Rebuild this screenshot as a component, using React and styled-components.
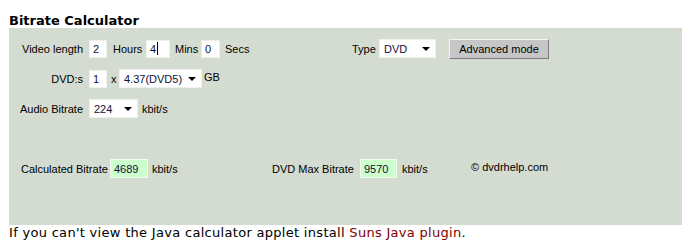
import styled, { createGlobalStyle } from "styled-components";

const GlobalStyle = createGlobalStyle`
  body {
    margin: 0;
    background: #fff;
  }
`;

const Page = styled.div`
  width: 683px;
  box-sizing: border-box;
  padding: 14px 0 0 9px;
`;

const Title = styled.h2`
  margin: 0;
  font: bold 13px/14px Verdana, "DejaVu Sans", sans-serif;
  color: #000;
`;

const Applet = styled.div`
  width: 673px;
  height: 197px;
  box-sizing: border-box;
  padding-top: 11px;
  display: flex;
  flex-direction: column;
  background: #d4dcd1;
  font: 11px "Liberation Sans", Arial, sans-serif;
  color: #000;
`;

const Row = styled.div`
  display: flex;
  align-items: center;
  height: 19px;
  margin-top: ${(p) => p.$top || 0}px;
  padding-left: ${(p) => p.$indent ?? 9}px;
`;

const Label = styled.span`
  flex: none;
  width: ${(p) => (p.$w ? `${p.$w}px` : "auto")};
  margin-left: ${(p) => p.$ml || 0}px;
  margin-bottom: ${(p) => p.$lift || 0}px;
  text-align: ${(p) => (p.$right ? "right" : "left")};
  white-space: nowrap;
`;

const Field = styled.div`
  flex: none;
  display: flex;
  align-items: center;
  width: ${(p) => p.$w}px;
  height: ${(p) => p.$h || 18}px;
  box-sizing: border-box;
  margin-left: ${(p) => p.$ml || 0}px;
  padding-left: 3px;
  background: ${(p) => (p.$green ? "#ccffcc" : "#fff")};
  border: 1px solid ${(p) => (p.$green ? "#f2fbf0" : "#eef1ec")};
  color: #101038;
`;

const Caret = styled.span`
  display: inline-block;
  width: 0;
  height: 13px;
  margin-left: 1px;
  border-left: 1px solid #000;
`;

const Select = styled.div`
  flex: none;
  display: flex;
  align-items: center;
  justify-content: space-between;
  width: ${(p) => p.$w}px;
  height: 19px;
  box-sizing: border-box;
  margin-left: ${(p) => p.$ml || 0}px;
  padding: 0 5px 0 4px;
  background: #fff;
  border: 1px solid #eef1ec;
  color: #101038;
`;

const Arrow = styled.span`
  width: 0;
  height: 0;
  border-left: 4px solid transparent;
  border-right: 4px solid transparent;
  border-top: 4px solid #000;
`;

const Button = styled.button`
  flex: none;
  width: 100px;
  height: 20px;
  margin-left: 13px;
  padding: 0;
  background: #c6c6c6;
  border: 1px solid;
  border-color: #f4f4f4 #7c7c7c #7c7c7c #f4f4f4;
  font: 11px "Liberation Sans", Arial, sans-serif;
  color: #000;
`;

const Note = styled.p`
  margin: 0;
  font: 13px/16px Verdana, "DejaVu Sans", sans-serif;
  letter-spacing: 0.3px;
  color: #000;

  a {
    color: #800000;
    text-decoration: none;
  }
`;

export default function App() {
  return (
    <>
      <GlobalStyle />
      <Page>
        <Title>Bitrate Calculator</Title>
        <Applet>
          <Row>
            <Label $w={65} $right>Video length</Label>
            <Field $w={18} $ml={6}>2</Field>
            <Label $w={33} $ml={6}>Hours</Label>
            <Field $w={24}>4<Caret /></Field>
            <Label $w={26} $ml={5}>Mins</Label>
            <Field $w={19}>0</Field>
            <Label $w={127} $ml={5}>Secs</Label>
            <Label $w={27}>Type</Label>
            <Select $w={57}>DVD<Arrow /></Select>
            <Button>Advanced mode</Button>
          </Row>
          <Row $top={11}>
            <Label $w={65} $right>DVD:s</Label>
            <Field $w={18} $ml={6}>1</Field>
            <Label $w={8} $ml={4}>x</Label>
            <Select $w={83}>4.37(DVD5)<Arrow /></Select>
            <Label $ml={2} $lift={3}>GB</Label>
          </Row>
          <Row $top={11}>
            <Label $w={65} $right>Audio Bitrate</Label>
            <Select $w={49} $ml={6}>224<Arrow /></Select>
            <Label $ml={4}>kbit/s</Label>
          </Row>
          <Row $top={41} $indent={12}>
            <Label $w={89}>Calculated Bitrate</Label>
            <Field $w={38} $h={19} $green>4689</Field>
            <Label $w={120} $ml={4}>kbit/s</Label>
            <Label $w={88}>DVD Max Bitrate</Label>
            <Field $w={37} $h={19} $green>9570</Field>
            <Label $w={69} $ml={5}>kbit/s</Label>
            <Label $lift={4}>© dvdrhelp.com</Label>
          </Row>
        </Applet>
        <Note>
          If you can't view the Java calculator applet install <a href="#java">Suns Java plugin</a>.
        </Note>
      </Page>
    </>
  );
}
